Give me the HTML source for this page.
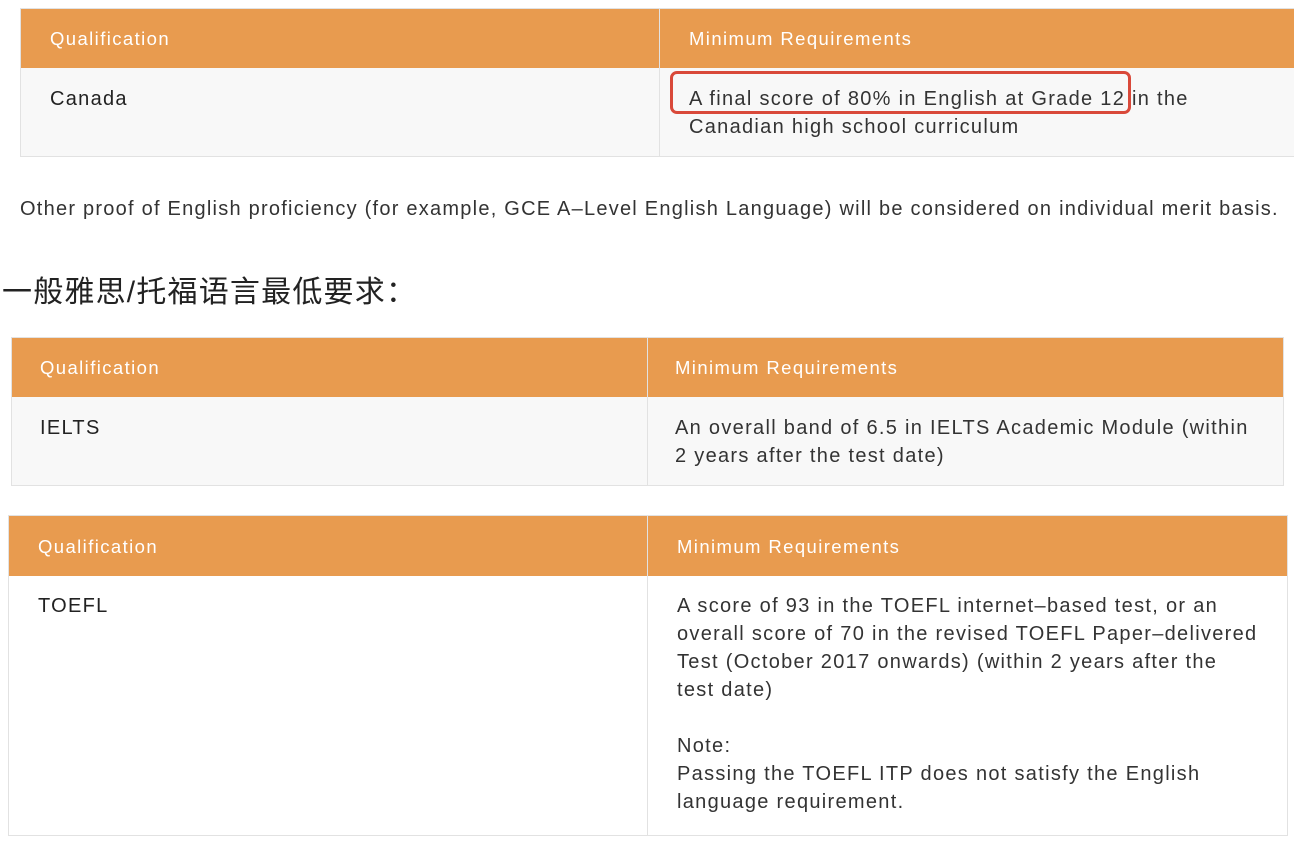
<!DOCTYPE html>
<html><head><meta charset="utf-8"><style>
body{margin:0;width:1294px;height:848px;background:#fff;position:relative;overflow:hidden;font-family:"Liberation Sans","Noto Sans CJK SC",sans-serif;color:#333}
.t{position:absolute;border:1px solid #e2e2e2;box-sizing:border-box}
.h{position:absolute;left:0;right:0;top:0;background:#e89b4f;color:#fff;font-size:18.5px;letter-spacing:1.4px}
.r{position:absolute;left:0;right:0;background:#f8f8f8;font-size:20px;letter-spacing:1.3px}
.s{position:absolute;top:0;bottom:0;width:1px}
.c{position:absolute;white-space:nowrap;line-height:28px}
</style></head><body>

<div class="t" style="left:20px;top:8px;width:1280px;height:149px">
 <div class="h" style="height:59px"><div class="c" style="left:29px;top:16px">Qualification</div><div class="c" style="left:668px;top:16px">Minimum Requirements</div></div>
 <div class="r" style="top:59px;bottom:0"><div class="c" style="left:29px;top:17px;color:#222">Canada</div><div class="c" style="left:668px;top:17px">A final score of 80% in English at Grade 12 in the<br>Canadian high school curriculum</div></div>
 <div class="s" style="left:638px;background:#e2e2e2"></div>
</div>
<div style="position:absolute;left:670px;top:71px;width:461px;height:43px;border:3px solid #d9493a;border-radius:7px;box-sizing:border-box"></div>

<div class="c" style="left:20px;top:195px;font-size:20px;letter-spacing:1.24px">Other proof of English proficiency (for example, GCE A–Level English Language) will be considered on individual merit basis.</div>
<div class="c" style="left:2px;top:274px;font-size:30px;line-height:38px;letter-spacing:1.2px;color:#222">一般雅思/托福语言最低要求：</div>

<div class="t" style="left:11px;top:337px;width:1273px;height:149px">
 <div class="h" style="height:59px"><div class="c" style="left:28px;top:16px">Qualification</div><div class="c" style="left:663px;top:16px">Minimum Requirements</div></div>
 <div class="r" style="top:59px;bottom:0"><div class="c" style="left:28px;top:17px;color:#222">IELTS</div><div class="c" style="left:663px;top:17px">An overall band of 6.5 in IELTS Academic Module (within<br>2 years after the test date)</div></div>
 <div class="s" style="left:635px;background:#e2e2e2"></div>
</div>

<div class="t" style="left:8px;top:515px;width:1280px;height:321px">
 <div class="h" style="height:60px"><div class="c" style="left:29px;top:17px">Qualification</div><div class="c" style="left:668px;top:17px">Minimum Requirements</div></div>
 <div class="r" style="top:60px;bottom:0;background:#fff"><div class="c" style="left:29px;top:16px;color:#222">TOEFL</div><div class="c" style="left:668px;top:16px">A score of 93 in the TOEFL internet–based test, or an<br>overall score of 70 in the revised TOEFL Paper–delivered<br>Test (October 2017 onwards) (within 2 years after the<br>test date)<br><br>Note:<br>Passing the TOEFL ITP does not satisfy the English<br>language requirement.</div></div>
 <div class="s" style="left:638px;background:#e2e2e2"></div>
</div>
</body></html>
